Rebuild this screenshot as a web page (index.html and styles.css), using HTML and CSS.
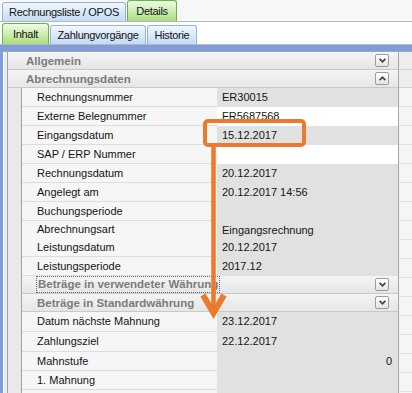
FILE: index.html
```html
<!DOCTYPE html>
<html lang="de">
<head>
  <meta charset="UTF-8">
  <title>Rechnung Details</title>
  <link rel="stylesheet" href="styles.css">
</head>
<body>

<div class="tabs top">
  <div class="tab w-liste">Rechnungsliste / OPOS</div>
  <div class="tab active w-details">Details</div>
</div>
<div class="tabs sub">
  <div class="tab active w-inhalt">Inhalt</div>
  <div class="tab w-zahl">Zahlungvorgänge</div>
  <div class="tab w-hist">Historie</div>
</div>

<div class="frame">
  <div class="panel">
    <div class="inset"></div>
    <div class="tree">
      <div class="head">
        <span>Allgemein</span>
        <span class="toggle"><svg width="7" height="5" viewBox="0 0 7 5"><path d="M0.6 0.8 3.5 3.7 6.4 0.8" fill="none" stroke="#4a4a4a" stroke-width="1.7"/></svg></span>
      </div>
      <div class="head">
        <span>Abrechnungsdaten</span>
        <span class="toggle"><svg width="7" height="5" viewBox="0 0 7 5"><path d="M0.6 4.2 3.5 1.3 6.4 4.2" fill="none" stroke="#4a4a4a" stroke-width="1.7"/></svg></span>
      </div>
      <div class="body">
        <div class="row"><div class="label">Rechnungsnummer</div><div class="value">ER30015</div></div>
        <div class="row"><div class="label">Externe Belegnummer</div><div class="value edit">FR5687568</div></div>
        <div class="row"><div class="label">Eingangsdatum</div><div class="value">15.12.2017</div></div>
        <div class="row"><div class="label">SAP / ERP Nummer</div><div class="value edit"></div></div>
        <div class="row"><div class="label">Rechnungsdatum</div><div class="value">20.12.2017</div></div>
        <div class="row"><div class="label">Angelegt am</div><div class="value">20.12.2017 14:56</div></div>
        <div class="row"><div class="label">Buchungsperiode</div><div class="value"></div></div>
        <div class="row short"><div class="label">Abrechnungsart</div><div class="value">Eingangsrechnung</div></div>
        <div class="row"><div class="label">Leistungsdatum</div><div class="value">20.12.2017</div></div>
        <div class="row"><div class="label">Leistungsperiode</div><div class="value">2017.12</div></div>

        <div class="head">
          <span class="focus">Beträge in verwendeter Währung</span>
          <span class="toggle"><svg width="7" height="5" viewBox="0 0 7 5"><path d="M0.6 0.8 3.5 3.7 6.4 0.8" fill="none" stroke="#4a4a4a" stroke-width="1.7"/></svg></span>
        </div>
        <div class="head">
          <span>Beträge in Standardwährung</span>
          <span class="toggle"><svg width="7" height="5" viewBox="0 0 7 5"><path d="M0.6 0.8 3.5 3.7 6.4 0.8" fill="none" stroke="#4a4a4a" stroke-width="1.7"/></svg></span>
        </div>
        <div class="row tall"><div class="label">Datum nächste Mahnung</div><div class="value">23.12.2017</div></div>
        <div class="row tall"><div class="label">Zahlungsziel</div><div class="value">22.12.2017</div></div>
        <div class="row"><div class="label">Mahnstufe</div><div class="value num">0</div></div>
        <div class="row"><div class="label">1. Mahnung</div><div class="value"></div></div>
        <div class="row"><div class="label"></div><div class="value"></div></div>
      </div>
    </div>
    <div class="side">
      <div class="side-head"></div>
      <div class="side-head"></div>
      <div class="side-rows"></div>
    </div>
  </div>
</div>

<svg class="mark" width="412" height="393" viewBox="0 0 412 393">
  <rect x="205" y="121" width="99" height="24" rx="3" fill="none" stroke="#ec7a2c" stroke-width="4"/>
  <line x1="213.5" y1="147" x2="213.5" y2="314" stroke="#ec7a2c" stroke-width="4.5"/>
  <polyline points="203,295 213.5,313 224,295" fill="none" stroke="#ec7a2c" stroke-width="6"/>
</svg>

</body>
</html>
```

FILE: styles.css
```css
body {
  margin: 0;
  width: 412px;
  height: 393px;
  overflow: hidden;
  position: relative;
  background: #ffffff;
  font-family: "Liberation Sans", Arial, sans-serif;
  font-size: 11px;
  color: #141414;
}

/* tab rows */
.tabs {
  display: flex;
  align-items: flex-end;
  gap: 1px;
  padding-left: 2px;
  border-bottom: 1px solid #b8b8b8;
}
.tabs.top {
  height: 21px;
  background: #f7f7f7;
}
.tabs.sub {
  height: 22px;
  background: #ffffff;
}
.tab {
  box-sizing: border-box;
  height: 19px;
  line-height: 18px;
  text-align: center;
  border: 1px solid #93b4dc;
  border-bottom: 0;
  border-radius: 3px 3px 0 0;
  background: linear-gradient(#f2f8ff, #d9e9fa 50%, #c3dbf5);
  white-space: nowrap;
  font-size: 11px;
  letter-spacing: -0.3px;
}
.tab.active {
  height: 21px;
  line-height: 20px;
  border-color: #6cb343;
  background: linear-gradient(#f0fbe6, #cdeeb0 50%, #abdc7e);
}
.w-liste { width: 124px; }
.w-details { width: 50px; }
.w-inhalt { width: 47px; }
.w-zahl { width: 96px; }
.w-hist { width: 50px; }

/* content frame */
.frame {
  border-top: 6px solid #7f9cdb;
  border-left: 3px solid #7f9cdb;
}
.panel {
  display: flex;
  border-top: 1px solid #a6a6a6;
}
.inset {
  width: 3px;
  background: #ebebeb;
  border-left: 1px solid #ffffff;
  border-right: 1px solid #a3a3a3;
}
.tree {
  width: 390px;
  background: #e9e9e9;
}

.head {
  display: flex;
  align-items: center;
  justify-content: space-between;
  height: 17px;
  padding: 0 9px 0 18px;
  border-bottom: 1px solid #c9c9c9;
  background: linear-gradient(#f4f4f4, #e6e6e6);
  font-weight: bold;
  font-size: 11.5px;
  color: #7c7c7c;
}
.body {
  margin-left: 13px;
  border-left: 1px solid #a3a3a3;
}
.body .head {
  padding-left: 15px;
}
.focus {
  outline: 1px dotted #666;
  padding: 0 1px;
  line-height: 15px;
}
.toggle {
  box-sizing: border-box;
  width: 14px;
  height: 13px;
  display: flex;
  align-items: center;
  justify-content: center;
  border: 1px solid #9c9c9c;
  border-radius: 2px;
  background: linear-gradient(#ffffff, #e4e4e4);
}

.row {
  display: grid;
  grid-template-columns: 195px 1fr;
  height: 19px;
}
.row.short { height: 17px; }
.row.tall { height: 20px; }
.label {
  padding-left: 15px;
  background: #f6f6f6;
  border-bottom: 1px solid #dddddd;
  line-height: 18px;
}
.row.short .label { line-height: 16px; }
.row.tall .label { line-height: 19px; }
.value {
  padding-left: 5px;
  background: #e1e1e1;
  line-height: 19px;
}
.value.edit {
  background: #ffffff;
}
.value.num {
  text-align: right;
  padding-right: 6px;
}

/* right neighbour column */
.side {
  flex: 1;
  border-left: 1px solid #a6a6a6;
  box-shadow: inset 1px 0 #ffffff, inset 2px 0 #b0b0b0;
  background: #f5f5f5;
}
.side-head {
  height: 17px;
  border-bottom: 1px solid #d2d2d2;
  background: #ededed;
}
.side-rows {
  height: 330px;
  background: repeating-linear-gradient(#f5f5f5 0 18px, #e2e2e2 18px 19px);
}

/* annotation overlay */
.mark {
  position: absolute;
  top: 0;
  left: 0;
  pointer-events: none;
}
```
